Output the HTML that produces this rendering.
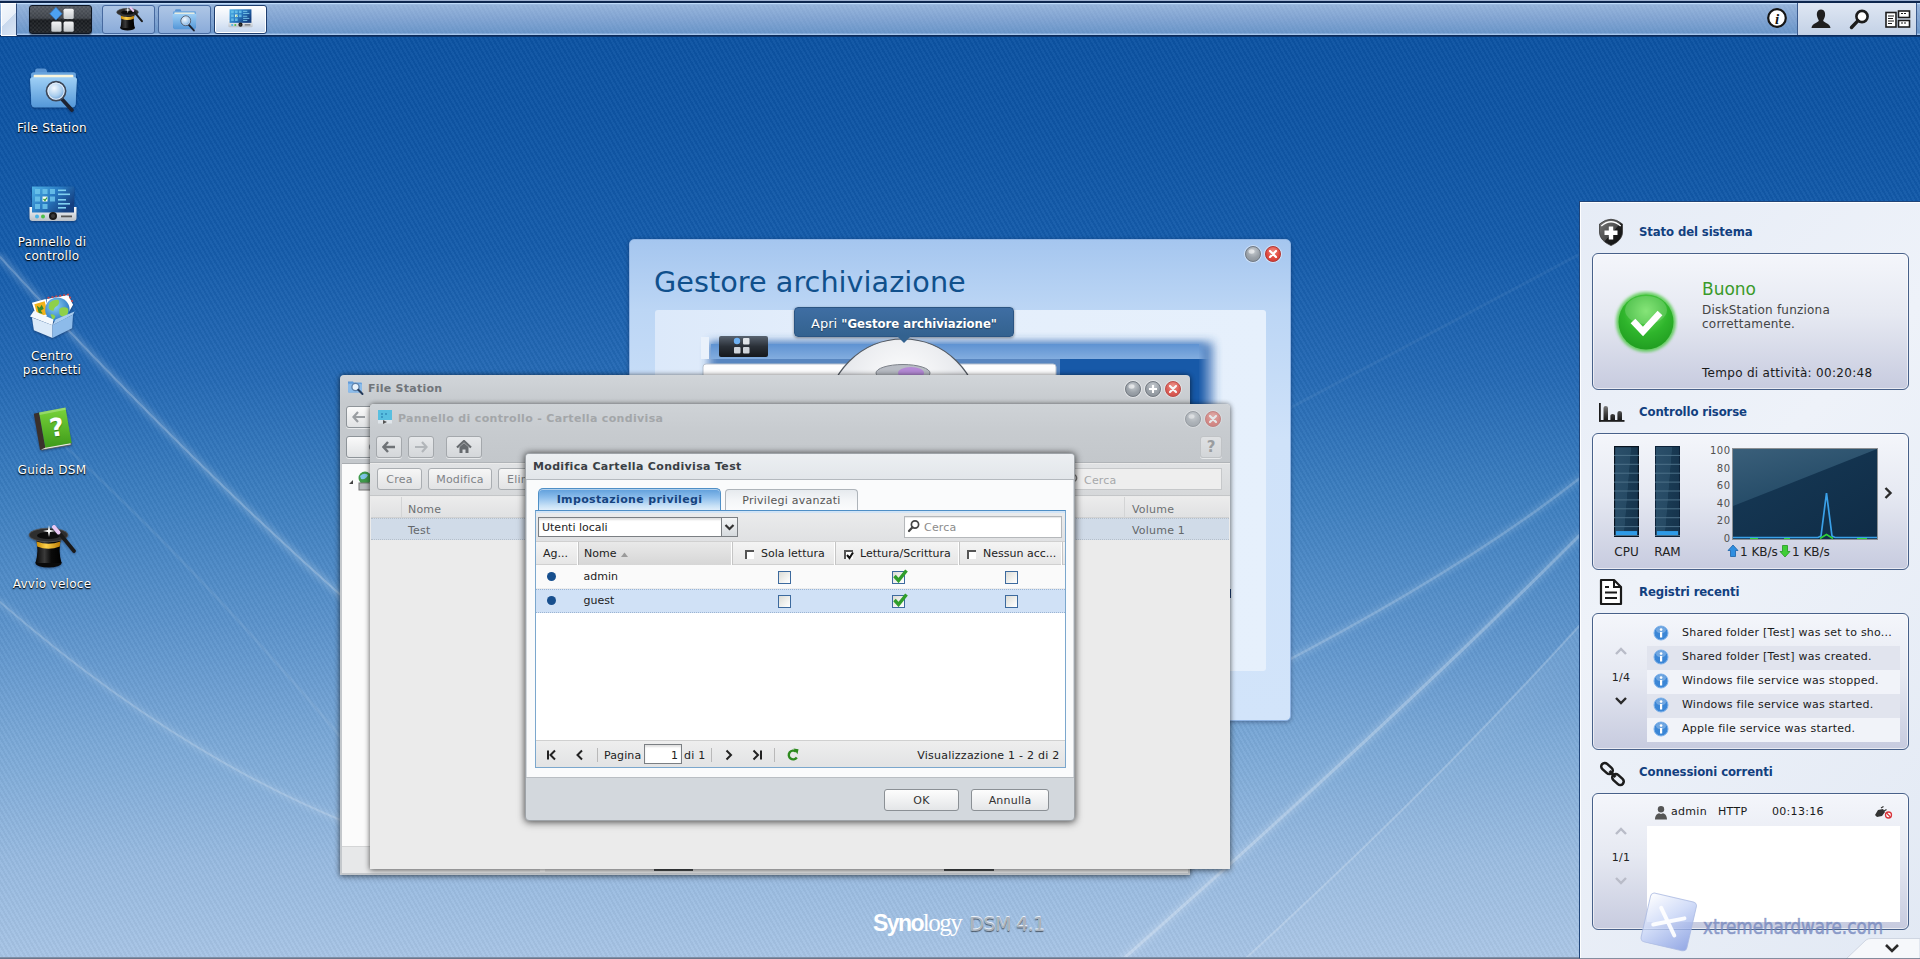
<!DOCTYPE html>
<html lang="it">
<head>
<meta charset="utf-8">
<title>Synology DiskStation</title>
<style>
*{box-sizing:border-box;margin:0;padding:0}
html,body{width:1920px;height:959px;overflow:hidden}
body{font-family:"DejaVu Sans","Liberation Sans",sans-serif;font-size:12px;color:#222;position:relative;
background:linear-gradient(to bottom,#0b52a2 0px,#0e55a5 120px,#155cab 250px,#256ab5 380px,#3d7fc0 500px,#5a92cb 620px,#7aa8d7 740px,#97bae0 860px,#a7c4e5 959px);}
.abs{position:absolute}
#stripes{position:absolute;left:0;top:0;width:1920px;height:959px;
background:repeating-linear-gradient(60deg,rgba(255,255,255,0.035) 0px,rgba(255,255,255,0.035) 2px,rgba(0,0,0,0.03) 2px,rgba(0,0,0,0.03) 4px);}
#streaks{position:absolute;left:0;top:0}
/* taskbar */
#taskbar{position:absolute;left:0;top:0;width:1920px;height:37px;background:linear-gradient(to bottom,#9cb0d0 0,#9cb0d0 .8px,#0d264d 1.300px,#0d264d 2.600px,#bfdbf9 3px,#bfdbf9 4px,#95b4db 4.600px,#82a5d3 18px,#6a96ca 33.300px,#a6c6ed 33.800px,#a6c6ed 34.800px,#0b2b5b 35.200px,#0b2b5b 36.200px,#0c4890 37px)}
#tb-stripes{position:absolute;left:0;top:4.500px;width:1920px;height:29px;background:repeating-linear-gradient(60deg,rgba(255,255,255,0.025) 0px,rgba(255,255,255,0.025) 2px,rgba(0,0,0,0.015) 2px,rgba(0,0,0,0.015) 4px)}
.tbbtn{position:absolute;top:4.500px;height:29px;width:53px;border:1px solid #46699f;border-radius:3px;background:linear-gradient(to bottom,#aec6e6,#8aabd9)}
.tbbtn.act{background:linear-gradient(to bottom,#ffffff,#dfe9f6 60%,#c4d6ee);border:1px solid #1d3d6e;box-shadow:0 0 0 1px #fff inset}
#mainmenu{position:absolute;left:28.500px;top:4.500px;width:63px;height:29px;border-radius:3px;border:1px solid #0d1624;background:linear-gradient(to bottom,#50555d 0,#3a3f46 45%,#14171b 52%,#1d2126 100%);box-shadow:0 1px 1px rgba(0,0,0,.4)}
#showdesk{position:absolute;left:0.500px;top:2.500px;width:16px;height:33px;background:linear-gradient(135deg,#f4f8fc 0,#e8eff8 50%,#c9d9ee 51%,#dbe6f4 100%);border:1px solid #fff;border-right:1px solid #2d4a78}
#tray{position:absolute;left:1797px;top:3px;width:120px;height:32px;background:linear-gradient(to bottom,#dfe7f3,#c3d1e6);border-left:1px solid #3b5b8e;border-right:1px solid #3b5b8e}
/* desktop icons */
.dicon{position:absolute;left:0;width:104px;text-align:center;color:#fff;font-size:12px;line-height:14px;letter-spacing:.28px;text-shadow:0 1px 1px rgba(0,0,0,.95),0 1px 2px rgba(0,0,0,.6)}
.dic{position:absolute;filter:drop-shadow(0 1px 1px rgba(0,0,30,.35))}
.dicon svg{display:block;margin:0 auto}
/* widget panel */
#widgets{position:absolute;left:1579px;top:200.500px;width:341px;height:759px;background:linear-gradient(135deg,#e6ecf6 0,#eef2f9 40%,#e2e9f4 100%);border-left:1.500px solid #1f4479;border-top:1.500px solid #1f4479;box-shadow:inset 1px 1px 0 rgba(255,255,255,.9)}
.wtitle{position:absolute;left:1639px;font-family:"DejaVu Sans Condensed","DejaVu Sans",sans-serif;font-weight:bold;font-size:13px;color:#12407f;letter-spacing:-0.12px;white-space:nowrap}
.wbox{position:absolute;left:1592px;width:317px;height:137px;border:1px solid #48618a;border-radius:6px;background:linear-gradient(to bottom,#f4f6fb 0,#e6e9f2 45%,#c7cbdf 100%);box-shadow:inset 0 0 0 1px rgba(255,255,255,.6)}
.wtxt{position:absolute;font-size:12px;color:#1a1a1a;white-space:nowrap}

/* window buttons */
.wb{position:absolute;width:16px;height:16px;border-radius:50%;border:1px solid #737a82;background:radial-gradient(circle at 50% 30%,#c9ced3 0,#9aa1a8 55%,#868d95 100%);box-shadow:0 0 0 1px rgba(255,255,255,.45)}
.wb.close{border-color:#b9352f;background:radial-gradient(circle at 50% 30%,#f08a80 0,#e04a40 55%,#cc372f 100%)}
.wb svg{position:absolute;left:0;top:0}
/* Gestore window */
#gest{position:absolute;left:629px;top:239px;width:662px;height:482px;border-radius:5px;border:1px solid #8fb4e4;background:linear-gradient(to bottom,#a5c6ef 0,#bcd6f5 70px,#cfe2f9 200px,#d2e4fa 100%);box-shadow:0 1px 4px rgba(0,0,30,.35)}
#gest h1{position:absolute;left:24px;top:24px;font-size:28.7px;font-weight:normal;color:#10508c;line-height:36px;letter-spacing:0.03px;white-space:nowrap}
#gest .inner{position:absolute;left:25px;top:70px;width:611px;height:361px;background:linear-gradient(to right,#dce9fa 0,#e4eefb 30%,#e6f0fc 100%);border-radius:3px;overflow:hidden}
#tip{position:absolute;left:794px;top:307px;width:220px;height:30px;background:linear-gradient(to bottom,#3f6ea3,#33628f);border:1px solid #2b5583;border-radius:4px;color:#fff;font-size:12px;line-height:31px;text-align:center;white-space:nowrap;box-shadow:0 1px 3px rgba(0,0,0,.4);text-shadow:0 1px 1px rgba(0,0,0,.4)}
#tip{font-size:13px}#tip b{font-family:"DejaVu Sans Condensed","DejaVu Sans",sans-serif}
#tip:after{content:"";position:absolute;left:102px;top:28px;border:7px solid transparent;border-top:7px solid #33628f;border-bottom:0}

/* File Station window */
.win{position:absolute;border-radius:4px 4px 0 0;background:#c9cdd1;box-shadow:0 0 5px rgba(0,0,0,.45),0 2px 6px rgba(0,0,0,.3)}
.wintitle{position:absolute;font-weight:bold;font-size:11px;white-space:nowrap;line-height:14px}
.navb{position:absolute;height:22px;border:1px solid #8e9499;border-radius:3px;background:linear-gradient(to bottom,#fafafa,#e0e2e4);box-shadow:0 1px 0 rgba(255,255,255,.6)}
.navb svg{position:absolute;left:50%;top:50%;transform:translate(-50%,-50%)}
.tbtn{position:absolute;top:469px;height:22px;border:1px solid #a9adb1;border-radius:3px;background:linear-gradient(to bottom,#f6f6f6,#e2e3e4);font-size:11px;color:#7f8387;line-height:22px;text-align:center;letter-spacing:.2px}
/* modal */
#modal{position:absolute;left:525px;top:453px;width:550px;height:368px;border-radius:4px;background:#d3d8dd;border:1px solid #9ea3a8;box-shadow:0 0 6px rgba(0,0,0,.5),0 2px 8px rgba(0,0,0,.35)}
#modal .hd{position:absolute;left:0;top:0;width:548px;height:26px;border-radius:3px 3px 0 0;background:linear-gradient(to bottom,#eceff2,#e2e6ea);border-bottom:1px solid #b4b9be}
#modal .bd{position:absolute;left:1px;top:26px;width:546px;height:297px;background:#fafbfc}
.hdc{position:absolute;top:0;height:23px;border-right:1px solid #c5c5c5;box-shadow:inset -1px 0 0 #fff;font-size:11px;line-height:24px;color:#222;white-space:nowrap;overflow:hidden}
.hcb{position:absolute;top:8px;width:9px;height:9px;background:#fff;border-top:2px solid #555;border-left:2px solid #555}
.cb{position:absolute;width:13px;height:13px;border:1px solid #3d6a9e;background:linear-gradient(135deg,#dcdcd6,#f6f6f4 70%,#fff);}
.pgi{position:absolute;top:0}
.btn{position:absolute;top:335px;height:22px;border:1px solid #8b9095;border-radius:3px;background:linear-gradient(to bottom,#fdfdfd,#e4e6e8);font-size:11px;color:#333;line-height:22px;text-align:center;letter-spacing:.2px}

.lrow{position:absolute;left:1647px;width:253px;height:24px;font-size:11px;line-height:21px;color:#1a1a1a;padding-left:35px;white-space:nowrap;letter-spacing:.24px}
.lrow svg{position:absolute;left:6px;top:3px}
.chev{position:absolute}
.ylab{position:absolute;left:1700px;width:30.500px;text-align:right;font-size:10px;color:#505050;line-height:12px;letter-spacing:.5px}
</style>
</head>
<body>

<svg width="0" height="0" style="position:absolute">
<defs>
<linearGradient id="fld1" x1="0" y1="0" x2="0" y2="1"><stop offset="0" stop-color="#9fd0f6"/><stop offset="1" stop-color="#5497d8"/></linearGradient>
<linearGradient id="fld2" x1="0" y1="0" x2="0" y2="1"><stop offset="0" stop-color="#6aa6e0"/><stop offset="1" stop-color="#3f7fc8"/></linearGradient>
<radialGradient id="lens" cx="0.4" cy="0.35" r="0.7"><stop offset="0" stop-color="#f4f9fe"/><stop offset="0.6" stop-color="#a9cdee"/><stop offset="1" stop-color="#5f95cf"/></radialGradient>
<linearGradient id="scr" x1="0" y1="0" x2="1" y2="0.6"><stop offset="0" stop-color="#4fb2e6"/><stop offset="0.5" stop-color="#2a7cc4"/><stop offset="1" stop-color="#143f80"/></linearGradient>
<linearGradient id="base" x1="0" y1="0" x2="0" y2="1"><stop offset="0" stop-color="#fafbfc"/><stop offset="1" stop-color="#b9c0c8"/></linearGradient>
<linearGradient id="bk" x1="0" y1="0" x2="0" y2="1"><stop offset="0" stop-color="#7ad43a"/><stop offset="1" stop-color="#3d9a1a"/></linearGradient>
<linearGradient id="hatb" x1="0" y1="0" x2="1" y2="0"><stop offset="0" stop-color="#050505"/><stop offset="0.35" stop-color="#3a3a3a"/><stop offset="0.6" stop-color="#0a0a0a"/><stop offset="1" stop-color="#000"/></linearGradient>
<linearGradient id="gold" x1="0" y1="0" x2="1" y2="0"><stop offset="0" stop-color="#c88a08"/><stop offset="0.4" stop-color="#ffd24a"/><stop offset="1" stop-color="#b87a05"/></linearGradient>
<radialGradient id="globe" cx="0.4" cy="0.35" r="0.7"><stop offset="0" stop-color="#8fd2f4"/><stop offset="1" stop-color="#1f6fc0"/></radialGradient>
<symbol id="i-folder" viewBox="0 0 48 48">
 <path d="M6 6.500 Q6 4.500 8 4.500 L15 4.500 Q17 4.500 17.500 6.500 L18 9 L6 9Z" fill="#5a95d4"/>
 <rect x="2" y="8" width="44" height="33" rx="2.500" fill="url(#fld2)"/>
 <rect x="4.500" y="10.500" width="39" height="5" rx="1" fill="#fbf6dc"/>
 <path d="M1 15.500 Q1 13 3.500 13 L44.500 13 Q47 13 47 15.500 L45.500 40 Q45.300 42.500 43 42.500 L5 42.500 Q2.700 42.500 2.500 40Z" fill="url(#fld1)"/>
 <path d="M31 33 L42 45" stroke="#1d2230" stroke-width="3.600" stroke-linecap="round"/>
 <circle cx="26.500" cy="26.500" r="9.300" fill="url(#lens)" stroke="#3c4657" stroke-width="1.800"/>
 <circle cx="26.500" cy="26.500" r="8" fill="none" stroke="#e6eef8" stroke-width="1"/>
</symbol>
<symbol id="i-panel" viewBox="0 0 48 48">
 <path d="M0.500 23 H4 V28 H44 V23 H47.500 V34 Q47.500 37 44.500 37 H3.500 Q0.500 37 0.500 34Z" fill="url(#base)"/>
 <rect x="3" y="2.500" width="42" height="26" fill="url(#scr)"/>
 <g fill="#6cc4ec" opacity=".85"><rect x="6" y="5" width="5" height="5"/><rect x="13.500" y="5" width="5" height="5"/><rect x="21" y="5" width="5" height="5"/><rect x="6" y="12.500" width="5" height="5"/><rect x="21" y="12.500" width="5" height="5"/><rect x="6" y="20" width="5" height="5"/><rect x="13.500" y="20" width="5" height="5"/></g>
 <rect x="13.500" y="12.500" width="5" height="5" fill="#f4fbf0"/><path d="M14.500 15 L16 16.500 L18 13.500" stroke="#2c9a3a" stroke-width="1.200" fill="none"/>
 <g fill="#7fd0f0"><rect x="29" y="5.500" width="8" height="1.600"/><rect x="29" y="9.500" width="12" height="1.600"/><rect x="29" y="15" width="8" height="1.600"/><rect x="29" y="19" width="12" height="1.600"/><rect x="29" y="23" width="8" height="1.600"/></g>
 <circle cx="8" cy="32.500" r="2" fill="#4ab4e6"/><circle cx="14" cy="32.500" r="2" fill="#4cc04a"/>
 <circle cx="24" cy="32" r="4" fill="#1a1a1a"/><circle cx="24" cy="32" r="2" fill="#3a3a3a"/>
 <rect x="32" y="31.500" width="11" height="1.800" fill="#555"/>
</symbol>
<symbol id="i-pkg" viewBox="0 0 48 48">
 <path d="M18 6 L40 2 L45 12 L38 24 L20 22Z" fill="#fff"/><path d="M19 5 L40 1.500 L44.500 9" stroke="#d64545" stroke-width="1.600" stroke-dasharray="2 2" fill="none"/>
 <path d="M3 10 L17 6 L22 23 L8 26Z" fill="#fff"/><path d="M5.500 11.500 L16 8.500 L19.500 21.500 L9 24Z" fill="#f2b21a"/><path d="M8 13 l3 2 l2 -3 l2 4 l-3 2 l2 3 l-4 0z" fill="#3e8a28"/>
 <circle cx="29" cy="17" r="12.500" fill="url(#globe)"/>
 <path d="M21 10 q4 -4 9 -3 q2 3 -1 6 q-3 1 -4 5 q-4 0 -5 -3z M31 16 q5 -3 9 0 q1 5 -3 8 q-5 1 -6 -3z M22 22 q3 -1 5 2 q-1 3 -3 3z" fill="#8ed04a"/>
 <path d="M1 24 L5 18 L25 27 L24 33Z" fill="#f3f8fd"/>
 <path d="M3 25 L24 33 L24 46 L5 38Z" fill="#dbeaf9"/>
 <path d="M24 33 L45 22 L44 36 L24 46Z" fill="#8dbbea"/>
 <path d="M24 33 L45 22 L46.500 19 L27 27Z" fill="#a9cdf0"/>
</symbol>
<symbol id="i-book" viewBox="0 0 48 48">
 <path d="M11 43 L42.500 38 L43 40.500 L12 46Z" fill="#e8e8e0" stroke="#555" stroke-width=".8"/>
 <path d="M4 8 L9.500 6.800 L16 43.500 L10.500 46Z" fill="#3a302c"/>
 <path d="M9.500 6.800 L37 1.500 L43.500 38.500 L16 43.500Z" fill="url(#bk)"/>
 <path d="M9.500 6.800 L37 1.500 L37.500 4 L10 9.500Z" fill="rgba(255,255,255,.25)"/>
</symbol>
<symbol id="i-hat" viewBox="0 0 48 48">
 <ellipse cx="20.500" cy="39" rx="13" ry="4.500" fill="#0a0a0a"/>
 <path d="M8 14 Q11 27 7.500 39 L33.500 39 Q30 27 33 14Z" fill="url(#hatb)"/>
 <path d="M8.600 17.500 Q20.500 22 32.400 17.500 L31.800 22.500 Q20.500 27 9.200 22.500Z" fill="url(#gold)"/>
 <ellipse cx="20.500" cy="11" rx="19.500" ry="6.800" fill="#2e2e2e" stroke="#555" stroke-width=".8"/>
 <ellipse cx="20.500" cy="11.500" rx="11.500" ry="3.600" fill="#0c0c0c"/>
 <path d="M28 5 L46 27" stroke="#1a1a1a" stroke-width="3.600" stroke-linecap="round"/>
 <path d="M26 3 L30.500 8.500" stroke="#e8c8f4" stroke-width="4" stroke-linecap="round"/>
 <path d="M21 1 L22 6 L27 7 L22 8 L21 13 L20 8 L15 7 L20 6Z" fill="#fff"/>
</symbol>
</defs>
</svg>
<div id="stripes"></div>
<svg id="streaks" width="1920" height="959" viewBox="0 0 1920 959">
<defs><filter id="sb" x="-5%" y="-5%" width="110%" height="110%"><feGaussianBlur stdDeviation="2.500"/></filter>
<linearGradient id="band" x1="0" y1="0" x2="0.45" y2="0.6"><stop offset="0" stop-color="#fff" stop-opacity=".3"/><stop offset="1" stop-color="#fff" stop-opacity=".04"/></linearGradient></defs>
<g fill="none" stroke-linecap="round">
<path d="M0 257 Q177 450 345 599" stroke="rgba(255,255,255,.16)" stroke-width="8" filter="url(#sb)"/>
<path d="M0 257 Q177 450 345 599" stroke="rgba(255,255,255,.2)" stroke-width="2"/>
<path d="M50 432 Q200 570 345 742" stroke="rgba(255,255,255,.07)" stroke-width="3"/>
<path d="M0 602 Q170 750 345 822" stroke="rgba(255,255,255,.1)" stroke-width="7" filter="url(#sb)"/>
<path d="M0 602 Q170 750 345 822" stroke="rgba(255,255,255,.17)" stroke-width="2"/>
<path d="M1230 690 Q1450 580 1580 478" stroke="rgba(255,255,255,.1)" stroke-width="8" filter="url(#sb)"/>
<path d="M1230 690 Q1450 580 1580 478" stroke="rgba(255,255,255,.17)" stroke-width="2.500"/>
<path d="M1105 975 Q1390 725 1580 535" stroke="rgba(255,255,255,.12)" stroke-width="9" filter="url(#sb)"/>
<path d="M1105 975 Q1390 725 1580 535" stroke="rgba(255,255,255,.22)" stroke-width="3"/>
<path d="M1290 408 L1580 254" stroke="rgba(255,255,255,.05)" stroke-width="3"/>
</g>
<path d="M1245 959 Q1430 790 1580 625 L1580 959 Z" fill="url(#band)"/>
<path d="M1245 959 Q1430 790 1580 625" stroke="rgba(255,255,255,.2)" stroke-width="2" fill="none"/>
<rect x="0" y="957" width="1920" height="2" fill="#7f8fa6"/>
</svg>

<!-- TASKBAR -->
<div id="taskbar"><div id="tb-stripes"></div>
<div id="showdesk"></div>

<div id="mainmenu"><svg width="61" height="27" viewBox="0 0 60 26" style="position:absolute;left:0;top:0"><defs><pattern id="chk" width="4" height="4" patternUnits="userSpaceOnUse"><rect width="2" height="2" fill="rgba(255,255,255,.09)"/><rect x="2" y="2" width="2" height="2" fill="rgba(255,255,255,.09)"/></pattern><linearGradient id="sq" x1="0" y1="0" x2="0" y2="1"><stop offset="0" stop-color="#f4f5f6"/><stop offset="1" stop-color="#c4c8cc"/></linearGradient></defs><rect width="60" height="26" rx="2" fill="url(#chk)"/><path d="M25.500 1 L31.500 7.300 L25.500 13.600 L19.500 7.300Z" fill="#4da2f2" stroke="#2a6fbe" stroke-width=".6"/><rect x="33" y="2.500" width="10" height="10" rx="1.500" fill="url(#sq)"/><rect x="21" y="15" width="10" height="10" rx="1.500" fill="url(#sq)"/><rect x="33" y="15" width="10" height="10" rx="1.500" fill="url(#sq)"/></svg></div>
<div class="tbbtn" style="left:102px"><svg width="27" height="27" style="position:absolute;left:13px;top:0"><use href="#i-hat"/></svg></div>
<div class="tbbtn" style="left:158px"><svg width="25" height="25" style="position:absolute;left:13px;top:1px"><use href="#i-folder"/></svg></div>
<div class="tbbtn act" style="left:214px"><svg width="25" height="25" style="position:absolute;left:13px;top:2px"><use href="#i-panel"/></svg></div>
<svg class="abs" style="left:1766px;top:7px" width="22" height="22" viewBox="0 0 22 22"><circle cx="11" cy="11" r="8.800" fill="#fff" stroke="#151515" stroke-width="2.200"/><text x="11" y="16.500" text-anchor="middle" font-family="'Liberation Serif',serif" font-style="italic" font-weight="bold" font-size="15" fill="#111">i</text></svg>
<div id="tray">
<svg class="abs" style="left:12px;top:5px" width="22" height="22" viewBox="0 0 22 22"><path d="M11 1.500 C14.500 1.500 15.500 4.500 15 8 C14.500 10.500 13.500 11.500 13.200 12.500 C13.200 14.500 20 15 20.500 20 L1.500 20 C2 15 8.800 14.500 8.800 12.500 C8.500 11.500 7.500 10.500 7 8 C6.500 4.500 7.500 1.500 11 1.500Z" fill="#1f1f1f"/></svg>
<svg class="abs" style="left:51px;top:5px" width="22" height="22" viewBox="0 0 22 22"><circle cx="13" cy="8.500" r="5.600" fill="#fff" stroke="#1c1c1c" stroke-width="2.600"/><path d="M8.800 12.800 L2.500 19.500" stroke="#1c1c1c" stroke-width="3.400" stroke-linecap="round"/></svg>
<svg class="abs" style="left:87px;top:7px" width="26" height="18" viewBox="0 0 26 18"><rect x="1" y="2.500" width="10" height="14.500" fill="#fff" stroke="#1c1c1c" stroke-width="1.600"/><path d="M3 6 H9 M3 8.500 H8 M3 11 H9 M3 13.500 H7" stroke="#1c1c1c" stroke-width="1"/><rect x="13.500" y="1" width="11" height="6.500" fill="#fff" stroke="#1c1c1c" stroke-width="1.600"/><rect x="13.500" y="10.500" width="11" height="6.500" fill="#fff" stroke="#1c1c1c" stroke-width="1.600"/><path d="M16 3.500 H22 M16 13 H22" stroke="#1c1c1c" stroke-width="1.200" stroke-dasharray="2 1"/></svg>
</div>

</div>

<!-- DESKTOP ICONS -->
<svg class="dic" style="left:29px;top:64px" width="49" height="49"><use href="#i-folder"/></svg>
<svg class="dic" style="left:29px;top:184px" width="48" height="48"><use href="#i-panel"/></svg>
<svg class="dic" style="left:29px;top:293px" width="47" height="47"><use href="#i-pkg"/></svg>
<svg class="dic" style="left:30px;top:406px" width="46" height="46"><use href="#i-book"/></svg>
<div class="abs" style="left:46px;top:414px;width:22px;text-align:center;font-family:'DejaVu Sans',sans-serif;font-weight:bold;font-size:25px;line-height:28px;color:#fff;transform:rotate(-9deg);text-shadow:0 1px 1px rgba(0,60,0,.4)">?</div>
<svg class="dic" style="left:28px;top:524px" width="48" height="48"><use href="#i-hat"/></svg>

<div class="dicon" style="top:121px">File Station</div>
<div class="dicon" style="top:235px">Pannello di<br>controllo</div>
<div class="dicon" style="top:349px">Centro<br>pacchetti</div>
<div class="dicon" style="top:463px">Guida DSM</div>
<div class="dicon" style="top:577px">Avvio veloce</div>


<div class="abs" style="left:873px;top:908px;white-space:nowrap;line-height:30px"><span style="font-family:'Liberation Sans',sans-serif;font-weight:bold;font-size:23px;letter-spacing:-1.6px;color:#fff">Syno</span><span style="font-family:'Liberation Serif',serif;font-size:25px;letter-spacing:-1.5px;color:#fff">logy</span><span style="font-family:'DejaVu Sans',sans-serif;font-size:19px;color:#a9b2bd;margin-left:8px;letter-spacing:-0.6px;text-shadow:0 -1px 0 rgba(255,255,255,.8),0 1px 1px rgba(0,0,0,.55)">DSM 4.1</span></div>
<!-- WIDGETS -->
<div id="widgets"></div>
<div class="wtitle" style="top:224px">Stato del sistema</div>
<div class="wbox" style="top:253px"></div>
<div class="wtitle" style="top:404px">Controllo risorse</div>
<div class="wbox" style="top:433px"></div>
<div class="wtitle" style="top:584px">Registri recenti</div>
<div class="wbox" style="top:613px"></div>
<div class="wtitle" style="top:764px">Connessioni correnti</div>
<div class="wbox" style="top:793px"></div>



<!-- WIDGET CONTENT -->
<svg class="abs" style="left:1598px;top:218px" width="26" height="28" viewBox="0 0 26 28"><defs><linearGradient id="sh" x1="0" y1="0" x2="1" y2="1"><stop offset="0" stop-color="#7a7a7a"/><stop offset="0.52" stop-color="#4c4c4c"/><stop offset="0.54" stop-color="#1f1f1f"/><stop offset="1" stop-color="#0e0e0e"/></linearGradient></defs><path d="M1.500 6 Q13 -3.500 24.500 6 L24.500 14 C24.500 20 20 24.500 13 27.500 C6 24.500 1.500 20 1.500 14Z" fill="url(#sh)" stroke="#3a3a3a" stroke-width=".8"/><path d="M3.300 8 Q13 -0.500 22.700 8" stroke="#fff" stroke-width="1.300" fill="none"/><path d="M10.800 8.500 H15.200 V12.500 H19.500 V17 H15.200 V21.500 H10.800 V17 H6.500 V12.500 H10.800Z" fill="#fff"/></svg>
<svg class="abs" style="left:1614px;top:290px" width="64" height="64" viewBox="0 0 64 64"><defs><radialGradient id="gc" cx="0.5" cy="0.3" r="0.75"><stop offset="0" stop-color="#6fe05f"/><stop offset="0.55" stop-color="#2fb52c"/><stop offset="1" stop-color="#1f9a1f"/></radialGradient><filter id="gb"><feGaussianBlur stdDeviation="1.500"/></filter></defs><circle cx="32" cy="32" r="30" fill="#49c840" filter="url(#gb)" opacity=".8"/><circle cx="32" cy="32" r="27.500" fill="url(#gc)"/><ellipse cx="32" cy="20" rx="21" ry="14" fill="rgba(255,255,255,.16)"/><path d="M19 31 L29 41.500 L46 23" stroke="#fff" stroke-width="6.500" fill="none"/></svg>
<div class="wtxt" style="left:1702px;top:278px;font-size:17px;color:#3a9a2a;line-height:22px">Buono</div>
<div class="wtxt" style="left:1702px;top:303px;font-size:12px;color:#444;line-height:14px;letter-spacing:.22px">DiskStation funziona<br>correttamente.</div>
<div class="wtxt" style="left:1702px;top:366px;font-size:12px;color:#1a1a1a;line-height:14px;letter-spacing:.3px">Tempo di attività: 00:20:48</div>

<svg class="abs" style="left:1598px;top:402px" width="28" height="21" viewBox="0 0 28 21"><defs><linearGradient id="bcg" x1="0" y1="0" x2="0" y2="1"><stop offset="0" stop-color="#7a7a7a"/><stop offset="0.6" stop-color="#3a3a3a"/><stop offset="1" stop-color="#1a1a1a"/></linearGradient></defs><rect x="1" y="1" width="1.800" height="18.500" fill="#1c1c1c"/><rect x="1" y="18" width="25.500" height="1.800" fill="#1c1c1c"/><path d="M5.500 18 V6 Q5.500 4 7.700 4 Q10 4 10 6 V18Z M12.400 18 V13.500 Q12.400 12 14.600 12 Q17 12 17 13.500 V18Z M19.400 18 V11 Q19.400 9 21.600 9 Q24 9 24 11 V18Z" fill="url(#bcg)"/></svg>
<div class="abs" style="left:1614px;top:446px"><svg width="25" height="91" viewBox="0 0 26 92" preserveAspectRatio="none"><defs><linearGradient id="bg1" x1="0" y1="0" x2="1" y2="0.3"><stop offset="0" stop-color="#2c506b"/><stop offset="0.62" stop-color="#264a64"/><stop offset="0.64" stop-color="#193a53"/><stop offset="1" stop-color="#17354e"/></linearGradient></defs><rect width="26" height="92" fill="url(#bg1)" stroke="#08131f" stroke-width="2.400"/><rect x="0" y="9" width="26" height="1" fill="#4d7088"/><rect x="0" y="18" width="26" height="1" fill="#4d7088"/><rect x="0" y="27" width="26" height="1" fill="#4d7088"/><rect x="0" y="36" width="26" height="1" fill="#4d7088"/><rect x="0" y="45" width="26" height="1" fill="#4d7088"/><rect x="0" y="54" width="26" height="1" fill="#4d7088"/><rect x="0" y="63" width="26" height="1" fill="#4d7088"/><rect x="0" y="72" width="26" height="1" fill="#4d7088"/><rect x="0" y="81" width="26" height="1" fill="#4d7088"/><rect x="0" y="90" width="26" height="1" fill="#4d7088"/><rect x="2" y="86" width="22" height="4" fill="#2f9be6"/></svg></div>
<div class="abs" style="left:1655px;top:446px"><svg width="25" height="91" viewBox="0 0 26 92" preserveAspectRatio="none"><defs><linearGradient id="bg2" x1="0" y1="0" x2="1" y2="0.3"><stop offset="0" stop-color="#2c506b"/><stop offset="0.62" stop-color="#264a64"/><stop offset="0.64" stop-color="#193a53"/><stop offset="1" stop-color="#17354e"/></linearGradient></defs><rect width="26" height="92" fill="url(#bg2)" stroke="#0d2238" stroke-width="2"/><rect x="0" y="9" width="26" height="1" fill="#4d7088"/><rect x="0" y="18" width="26" height="1" fill="#4d7088"/><rect x="0" y="27" width="26" height="1" fill="#4d7088"/><rect x="0" y="36" width="26" height="1" fill="#4d7088"/><rect x="0" y="45" width="26" height="1" fill="#4d7088"/><rect x="0" y="54" width="26" height="1" fill="#4d7088"/><rect x="0" y="63" width="26" height="1" fill="#4d7088"/><rect x="0" y="72" width="26" height="1" fill="#4d7088"/><rect x="0" y="81" width="26" height="1" fill="#4d7088"/><rect x="0" y="90" width="26" height="1" fill="#4d7088"/><rect x="2" y="86" width="22" height="4" fill="#2f9be6"/></svg></div>
<div class="wtxt" style="left:1613px;top:545px;width:27px;text-align:center;font-size:12px;color:#222">CPU</div>
<div class="wtxt" style="left:1654px;top:545px;width:27px;text-align:center;font-size:12px;color:#222">RAM</div>
<div class="ylab" style="top:445px">100</div><div class="ylab" style="top:463px">80</div><div class="ylab" style="top:480px">60</div><div class="ylab" style="top:498px">40</div><div class="ylab" style="top:515px">20</div><div class="ylab" style="top:533px">0</div>
<svg class="abs" style="left:1732px;top:448px" width="146" height="92" viewBox="0 0 146 92"><defs><linearGradient id="cg" x1="0" y1="0" x2="1" y2="1"><stop offset="0" stop-color="#173a57"/><stop offset="1" stop-color="#0f2c46"/></linearGradient><linearGradient id="cg2" x1="0" y1="0" x2="0.6" y2="1"><stop offset="0" stop-color="#3a5f7a"/><stop offset="1" stop-color="#1f4662"/></linearGradient></defs><rect x="0.500" y="0.500" width="145" height="91" fill="url(#cg)" stroke="#8a8e92"/><path d="M1 1 L145 1 L1 58Z" fill="url(#cg2)"/><path d="M1 89.500 L86 89.500 L89 88 L94.500 45 L100 88 L103 89.500 L145 89.500" stroke="#3aa0e8" stroke-width="1.700" fill="none"/><path d="M88 90.500 L94.500 86.500 L101 90.500" stroke="#2fd23a" stroke-width="1.500" fill="none"/><path d="M18 90.500 h8 M52 90.500 h6 M125 90.500 h10" stroke="#2fd23a" stroke-width="1"/></svg>
<svg class="abs" style="left:1727px;top:544px" width="12" height="14" viewBox="0 0 12 14"><path d="M6 1 L11 6.500 H8.500 V12.500 H3.500 V6.500 H1Z" fill="#2f8ee0" stroke="#1b62a8" stroke-width=".8"/></svg>
<div class="wtxt" style="left:1740px;top:545px;font-size:12px;color:#222">1 KB/s</div>
<svg class="abs" style="left:1779px;top:544px" width="12" height="14" viewBox="0 0 12 14"><path d="M6 13 L11 7.500 H8.500 V1.500 H3.500 V7.500 H1Z" fill="#3fce36" stroke="#23981f" stroke-width=".8"/></svg>
<div class="wtxt" style="left:1792px;top:545px;font-size:12px;color:#222">1 KB/s</div>
<svg class="abs" style="left:1883px;top:486px" width="10" height="14"><path d="M2.500 2 L7.500 7 L2.500 12" stroke="#2a2a2a" stroke-width="2.400" fill="none"/></svg>

<svg class="abs" style="left:1599px;top:578px" width="24" height="28" viewBox="0 0 24 28"><path d="M2 2 H15 L22 9 V26 H2Z" fill="#fff" stroke="#1a1a1a" stroke-width="2.200" stroke-linejoin="round"/><path d="M15 2 V9 H22" fill="none" stroke="#1a1a1a" stroke-width="2"/><path d="M6 9 H10 M6 14.500 H18 M6 20 H18" stroke="#1a1a1a" stroke-width="2.200"/></svg>
<div class="lrow" style="top:622px;background:transparent"><svg width="16" height="16" viewBox="0 0 16 16"><circle cx="8" cy="8" r="7" fill="#3b86d6" stroke="#7fb2ea" stroke-width="1"/><ellipse cx="8" cy="5" rx="5" ry="3.2" fill="rgba(255,255,255,.28)"/><rect x="7" y="7" width="2.2" height="5.5" fill="#fff"/><circle cx="8.1" cy="4.600" r="1.300" fill="#fff"/></svg>Shared folder [Test] was set to sho...</div>
<div class="lrow" style="top:646px;background:#e1e4ee"><svg width="16" height="16" viewBox="0 0 16 16"><circle cx="8" cy="8" r="7" fill="#3b86d6" stroke="#7fb2ea" stroke-width="1"/><ellipse cx="8" cy="5" rx="5" ry="3.2" fill="rgba(255,255,255,.28)"/><rect x="7" y="7" width="2.2" height="5.5" fill="#fff"/><circle cx="8.1" cy="4.600" r="1.300" fill="#fff"/></svg>Shared folder [Test] was created.</div>
<div class="lrow" style="top:670px;background:#f1f3f9"><svg width="16" height="16" viewBox="0 0 16 16"><circle cx="8" cy="8" r="7" fill="#3b86d6" stroke="#7fb2ea" stroke-width="1"/><ellipse cx="8" cy="5" rx="5" ry="3.2" fill="rgba(255,255,255,.28)"/><rect x="7" y="7" width="2.2" height="5.5" fill="#fff"/><circle cx="8.1" cy="4.600" r="1.300" fill="#fff"/></svg>Windows file service was stopped.</div>
<div class="lrow" style="top:694px;background:#e1e4ee"><svg width="16" height="16" viewBox="0 0 16 16"><circle cx="8" cy="8" r="7" fill="#3b86d6" stroke="#7fb2ea" stroke-width="1"/><ellipse cx="8" cy="5" rx="5" ry="3.2" fill="rgba(255,255,255,.28)"/><rect x="7" y="7" width="2.2" height="5.5" fill="#fff"/><circle cx="8.1" cy="4.600" r="1.300" fill="#fff"/></svg>Windows file service was started.</div>
<div class="lrow" style="top:718px;background:#f1f3f9"><svg width="16" height="16" viewBox="0 0 16 16"><circle cx="8" cy="8" r="7" fill="#3b86d6" stroke="#7fb2ea" stroke-width="1"/><ellipse cx="8" cy="5" rx="5" ry="3.2" fill="rgba(255,255,255,.28)"/><rect x="7" y="7" width="2.2" height="5.5" fill="#fff"/><circle cx="8.1" cy="4.600" r="1.300" fill="#fff"/></svg>Apple file service was started.</div>

<svg class="abs" style="left:1614px;top:646px" width="14" height="10"><path d="M2 8 L7 3 L12 8" stroke="#b9bcc8" stroke-width="2.400" fill="none"/></svg>
<div class="wtxt" style="left:1606px;top:671px;width:30px;text-align:center;font-size:11px;color:#222;letter-spacing:.3px">1/4</div>
<svg class="abs" style="left:1614px;top:696px" width="14" height="10"><path d="M2 2 L7 7 L12 2" stroke="#2a2a2a" stroke-width="2.400" fill="none"/></svg>

<svg class="abs" style="left:1599px;top:760px" width="28" height="28" viewBox="0 0 28 28"><g fill="none" stroke="#1c1c1c" stroke-width="2.600"><rect x="1.500" y="5" width="13" height="7" rx="3.500" transform="rotate(42 8 8.500)"/><rect x="12.500" y="16" width="13" height="7" rx="3.500" transform="rotate(42 19 19.500)"/><path d="M10.500 11 L16.500 17"/></g></svg>
<div class="abs" style="left:1647px;top:826px;width:253px;height:96px;background:#fff"></div>
<svg class="abs" style="left:1654px;top:805px" width="14" height="15" viewBox="0 0 14 15"><circle cx="7" cy="4.200" r="3.200" fill="#555"/><path d="M1 14.500 C1 10 3.500 8.500 5 8.200 L7 9 L9 8.200 C10.500 8.500 13 10 13 14.500Z" fill="#555"/></svg>
<div class="wtxt" style="left:1671px;top:805px;font-size:11px;color:#1a1a1a;letter-spacing:.3px">admin</div>
<div class="wtxt" style="left:1718px;top:805px;font-size:11px;color:#1a1a1a;letter-spacing:.3px">HTTP</div>
<div class="wtxt" style="left:1772px;top:805px;font-size:11px;color:#1a1a1a;letter-spacing:.3px">00:13:16</div>
<svg class="abs" style="left:1874px;top:806px" width="20" height="14" viewBox="0 0 20 14"><path d="M1 9 L4 4 L9 3 L11 6 L8 10 L3 11Z" fill="#333"/><path d="M7 2 L9.500 0.500 M10 5 L12.500 3.500" stroke="#333" stroke-width="1.200"/><circle cx="14.500" cy="9" r="3" fill="#fff" stroke="#d8343a" stroke-width="1.300"/><path d="M12.500 7 L16.500 11" stroke="#d8343a" stroke-width="1.200"/></svg>
<svg class="abs" style="left:1614px;top:826px" width="14" height="10"><path d="M2 8 L7 3 L12 8" stroke="#b9bcc8" stroke-width="2.400" fill="none"/></svg>
<div class="wtxt" style="left:1606px;top:851px;width:30px;text-align:center;font-size:11px;color:#222;letter-spacing:.3px">1/1</div>
<svg class="abs" style="left:1614px;top:876px" width="14" height="10"><path d="M2 2 L7 7 L12 2" stroke="#b9bcc8" stroke-width="2.400" fill="none"/></svg>
<!-- bottom tab + watermark -->
<svg class="abs" style="left:1846px;top:936px" width="74" height="23" viewBox="0 0 74 23"><path d="M0 23 L20 4 Q22 2.500 25 2.500 L74 2.500 L74 23Z" fill="#f6f8fb" stroke="#cfd6e2" stroke-width="1"/><path d="M40 9 L46 15 L52 9" stroke="#2a2a2a" stroke-width="2.600" fill="none"/></svg>
<svg class="abs" style="left:1630px;top:888px" width="270" height="71" viewBox="0 0 270 71"><defs><linearGradient id="wmg" x1="0" y1="0" x2="1" y2="1"><stop offset="0" stop-color="#ffffff" stop-opacity=".85"/><stop offset="0.45" stop-color="#c9d6f7" stop-opacity=".8"/><stop offset="1" stop-color="#7f97e0" stop-opacity=".8"/></linearGradient></defs><g transform="rotate(13 39 35)"><rect x="15" y="9" width="47" height="50" rx="4" fill="url(#wmg)" stroke="rgba(170,185,225,.8)" stroke-width="1"/><path d="M28 22 L47 46 M53 27 L24 40" stroke="rgba(255,255,255,.92)" stroke-width="4" stroke-linecap="round"/></g><text x="73" y="45.500" font-family="'DejaVu Sans Condensed','Liberation Sans',sans-serif" font-size="22" fill="rgba(118,136,190,.75)" stroke="rgba(118,136,190,.6)" stroke-width=".700" textLength="180" lengthAdjust="spacingAndGlyphs">xtremehardware.com</text></svg>
<div class="abs" style="left:0;top:957.500px;width:1920px;height:2px;background:rgba(100,110,130,.75)"></div>

<!-- GESTORE ARCHIVIAZIONE -->
<div id="gest">
 <h1>Gestore archiviazione</h1>
 <div class="inner">
  <svg width="611" height="361" viewBox="0 0 611 361" style="position:absolute;left:0;top:0">
   <defs>
    <filter id="blur6" x="-10%" y="-10%" width="120%" height="120%"><feGaussianBlur stdDeviation="5"/></filter>
    <filter id="blur3" x="-10%" y="-10%" width="120%" height="120%"><feGaussianBlur stdDeviation="3"/></filter>
    <linearGradient id="mtb" x1="0" y1="0" x2="0" y2="1"><stop offset="0" stop-color="#4d86cc"/><stop offset="1" stop-color="#83addf"/></linearGradient>
    <radialGradient id="disc" cx="0.5" cy="0.3" r="0.75"><stop offset="0" stop-color="#ffffff"/><stop offset="0.55" stop-color="#e6e8ec"/><stop offset="0.92" stop-color="#bfc3c9"/><stop offset="1" stop-color="#9a9fa6"/></radialGradient>
    <linearGradient id="mm" x1="0" y1="0" x2="0" y2="1"><stop offset="0" stop-color="#596370"/><stop offset="0.5" stop-color="#2a3038"/><stop offset="1" stop-color="#15181c"/></linearGradient>
    <mask id="fade"><rect x="56" y="34" width="492" height="340" fill="#fff" filter="url(#blur3)"/><rect x="56" y="34" width="488" height="340" fill="#fff"/></mask>
   </defs>
   <rect x="54" y="32" width="504" height="340" fill="#2a63ad" filter="url(#blur6)" opacity=".75"/>
   <g mask="url(#fade)">
   <rect x="52" y="27" width="504" height="22" fill="url(#mtb)"/>
   <rect x="405" y="49" width="151" height="320" fill="#1759a8"/>
   </g>
   <rect x="46" y="27" width="8" height="22" fill="#e9f1fb"/>
   <rect x="64" y="26" width="49" height="21" rx="2" fill="url(#mm)"/>
   <circle cx="82" cy="31" r="3.2" fill="#6fb1f2"/><rect x="88" y="28" width="6.5" height="6.5" rx="1" fill="#dfe3e8"/><rect x="79" y="37" width="6.5" height="6.5" rx="1" fill="#cfd4da"/><rect x="88" y="37" width="6.5" height="6.5" rx="1" fill="#cfd4da"/>
   <rect x="48" y="54" width="353" height="320" rx="3" fill="#fdfdfe" stroke="#b9c2cf"/>
   <circle cx="248" cy="105" r="76" fill="url(#disc)" stroke="#555b63" stroke-width="1.2"/>
   <ellipse cx="248" cy="63" rx="27" ry="8.5" fill="#b8bcc4" stroke="#7d828a"/>
   <ellipse cx="256" cy="63" rx="13" ry="6" fill="#b58ad6"/>
   <rect x="573" y="279" width="3" height="9" fill="#1c3f73"/>
  </svg>
 </div>
 <div class="wb" style="left:615px;top:6px"><svg width="14" height="14"><ellipse cx="5.5" cy="4.5" rx="3" ry="2.2" fill="rgba(255,255,255,.55)"/></svg></div>
 <div class="wb close" style="left:635px;top:6px"><svg width="14" height="14"><path d="M4 4 L10 10 M10 4 L4 10" stroke="#fff" stroke-width="2.2" stroke-linecap="round"/></svg></div>
</div>
<div id="tip">Apri <b>"Gestore archiviazione"</b></div>

<!-- FILE STATION WINDOW -->
<div class="win" id="fswin" style="left:340px;top:375px;width:850px;height:500px;background:linear-gradient(to bottom,#d1d5d9 0,#c6cace 28px,#c4c8cc 88px,#c4c8cc 100%)">
 <svg style="position:absolute;left:7px;top:4px" width="18" height="18" viewBox="0 0 18 18"><path d="M1 4 L1 2.5 L6 2.5 L7 4 Z" fill="#5b95d6"/><rect x="1" y="3.5" width="14" height="10" rx="1" fill="#6aa3de"/><rect x="1" y="5" width="14" height="8.5" rx="1" fill="#8cbcea"/><circle cx="8.5" cy="8" r="3.6" fill="#e8f2fb" stroke="#5c7fa8" stroke-width="1.3"/><path d="M11.3 10.8 L15.5 15" stroke="#243a5a" stroke-width="2" stroke-linecap="round"/></svg>
 <div class="wintitle" style="left:28px;top:7px;color:#70757a;letter-spacing:.25px">File Station</div>
 <div class="wb" style="left:784.5px;top:6px"><svg width="14" height="14"><ellipse cx="5.5" cy="4.5" rx="3" ry="2.2" fill="rgba(255,255,255,.55)"/></svg></div>
 <div class="wb" style="left:804.5px;top:6px"><svg width="14" height="14"><path d="M7 3 V11 M3 7 H11" stroke="#fff" stroke-width="2"/></svg></div>
 <div class="wb close" style="left:824.5px;top:6px;opacity:.85"><svg width="14" height="14"><path d="M4 4 L10 10 M10 4 L4 10" stroke="#fff" stroke-width="2.2" stroke-linecap="round"/></svg></div>
 <div class="navb" style="left:6px;top:31px;width:40px"><svg width="14" height="12" viewBox="0 0 14 12" style="left:12px"><path d="M6 1 L1.5 6 L6 11 M2 6 H13" stroke="#9a9ea2" stroke-width="2.2" fill="none"/></svg></div>
 <div class="navb" style="left:6px;top:61px;width:40px"><svg width="10" height="10" style="left:25px"><circle cx="6" cy="5" r="3.5" fill="none" stroke="#8a8e92" stroke-width="1.3"/></svg></div>
 <div style="position:absolute;left:2px;top:88px;width:200px;height:383px;background:#fbfbfb;border-top:1px solid #a8acb0"></div>
 <div style="position:absolute;left:2px;top:471px;width:846px;height:27px;background:#e7e8e9;border-top:1px solid #d4d5d6"></div><div style="position:absolute;left:314px;top:493.500px;width:39px;height:2px;background:#4a4d50"></div><div style="position:absolute;left:604px;top:493.500px;width:50px;height:2px;background:#4a4d50"></div><div style="position:absolute;left:200px;top:492px;width:5px;height:5px;background:#fafafa"></div>
 <svg style="position:absolute;left:8px;top:95px" width="24" height="22" viewBox="0 0 24 22"><path d="M1 14 L5 14 L5 10 Z" fill="#444"/><circle cx="17" cy="8" r="6.5" fill="#3f9a4b"/><path d="M12 6 q4 -4 8 -1 q-2 5 -7 4z" fill="#7fc4e8"/><rect x="11" y="13" width="12" height="7" fill="#b9bcc0" stroke="#777"/></svg>
</div>

<!-- PANNELLO DI CONTROLLO WINDOW -->
<div class="win" id="cpwin" style="left:370px;top:404px;width:860px;height:465px;background:#ebebeb">
 <div style="position:absolute;left:0;top:0;width:860px;height:59px;border-radius:4px 4px 0 0;background:linear-gradient(to bottom,#cfd3d7 0,#c7cbcf 28px,#c3c7cb 58px);border-bottom:1px solid #b0b4b8"></div>
 <svg style="position:absolute;left:7px;top:5px" width="16" height="16" viewBox="0 0 16 16"><rect x="1" y="1" width="14" height="10" fill="#58bfe0"/><rect x="1" y="11" width="14" height="3.5" fill="#dfe5ea"/><path d="M4 4h2v2h-2zM8 4h2v2h-2zM4 7h2v2h-2z" fill="#3c9ac4"/><path d="M6 11 l4 2 l-4 2z" fill="#555"/></svg>
 <div class="wintitle" style="left:28px;top:8px;color:#a3a6a9;letter-spacing:.34px">Pannello di controllo - Cartella condivisa</div>
 <div class="wb" style="left:814.5px;top:7px;opacity:.6"><svg width="14" height="14"><ellipse cx="5.5" cy="4.5" rx="3" ry="2.2" fill="rgba(255,255,255,.6)"/></svg></div>
 <div class="wb close" style="left:834.5px;top:7px;opacity:.5"><svg width="14" height="14"><path d="M4 4 L10 10 M10 4 L4 10" stroke="#fff" stroke-width="2.2" stroke-linecap="round"/></svg></div>
 <div class="navb" style="left:6px;top:32px;width:26px;border-color:#a4a8ac;background:linear-gradient(to bottom,#e6e8ea,#d4d7da)"><svg width="14" height="12" viewBox="0 0 14 12"><path d="M6 1 L1.5 6 L6 11 M2 6 H13" stroke="#6f7377" stroke-width="2.4" fill="none"/></svg></div>
 <div class="navb" style="left:38px;top:32px;width:26px;border-color:#a4a8ac;background:linear-gradient(to bottom,#e6e8ea,#d4d7da)"><svg width="14" height="12" viewBox="0 0 14 12"><path d="M8 1 L12.5 6 L8 11 M12 6 H1" stroke="#b2b6ba" stroke-width="2.2" fill="none"/></svg></div>
 <div class="navb" style="left:76px;top:32px;width:36px;border-color:#a4a8ac;background:linear-gradient(to bottom,#e6e8ea,#d4d7da)"><svg width="16" height="14" viewBox="0 0 16 14"><path d="M1 7.5 L8 1 L15 7.5" stroke="#666a6e" stroke-width="2.2" fill="none"/><path d="M3.5 7 V13 H6.5 V9.5 H9.5 V13 H12.5 V7 L8 3z" fill="#666a6e"/></svg></div>
 <div class="navb" style="left:830px;top:32px;width:22px;border-color:#c0c3c6;background:linear-gradient(to bottom,#dfe1e3,#d2d5d8);color:#9a9da0;font-weight:bold;font-size:15px;line-height:20px;text-align:center">?</div>
 <!-- toolbar 2 -->
 <div style="position:absolute;left:0;top:60px;width:860px;height:32px;background:linear-gradient(to bottom,#e0e2e4,#d6d8da);border-bottom:1px solid #c4c6c8"></div>
 <div class="tbtn" style="left:7px;top:64px;width:45px">Crea</div>
 <div class="tbtn" style="left:58px;top:64px;width:64px">Modifica</div>
 <div class="tbtn" style="left:128px;top:64px;width:60px;text-align:left;padding-left:8px">Elimina</div>
 <div style="position:absolute;left:704px;top:64px;width:148px;height:22px;border:1px solid #c6c8ca;background:#eeeeee;font-size:11px;line-height:23px;color:#a6a8aa;padding-left:9px;letter-spacing:.2px"><svg width="12" height="12" style="position:absolute;left:-7px;top:4px"><circle cx="5" cy="5" r="3.6" fill="none" stroke="#777" stroke-width="1.5"/></svg>Cerca</div>
 <!-- grid -->
 <div style="position:absolute;left:1px;top:93px;width:858px;height:21px;background:linear-gradient(to bottom,#ececec,#e0e1e2);border-bottom:1px solid #d0d1d2"></div>
 <div style="position:absolute;left:31px;top:93px;width:1px;height:21px;background:#d3d4d5"></div>
 <div style="position:absolute;left:754px;top:93px;width:1px;height:21px;background:#d3d4d5"></div>
 <div class="wtxt" style="left:38px;top:98.500px;font-size:11px;color:#6d7073;letter-spacing:.2px">Nome</div>
 <div class="wtxt" style="left:762px;top:98.500px;font-size:11px;color:#6d7073;letter-spacing:.2px">Volume</div>
 <div style="position:absolute;left:1px;top:114px;width:858px;height:22px;background:#d0dbe8;border-top:1px dotted #b5bfca;border-bottom:1px dotted #b5bfca"></div>
 <div class="wtxt" style="left:38px;top:120px;font-size:11px;color:#64676a;letter-spacing:.2px">Test</div>
 <div class="wtxt" style="left:762px;top:120px;font-size:11px;color:#64676a;letter-spacing:.2px">Volume 1</div>
</div>

<!-- MODAL -->
<div id="modal">
 <div class="hd"></div>
 <div class="wintitle" style="left:7px;top:6px;color:#3a3f45;letter-spacing:.33px">Modifica Cartella Condivisa Test</div>
 <div class="bd"></div>
 <!-- tabs -->
 <div style="position:absolute;left:12px;top:34px;width:183px;height:23px;border:1px solid #4f8fc6;border-bottom:0;border-radius:5px 5px 0 0;background:linear-gradient(to bottom,#5e9edb 0,#8fbfec 40%,#c6e0f6 75%,#e6f2fc 100%);box-shadow:inset 0 1px 0 rgba(255,255,255,.5);font-weight:bold;font-size:11px;color:#15437f;text-align:center;line-height:22px;letter-spacing:.35px;white-space:nowrap">Impostazione privilegi</div>
 <div style="position:absolute;left:199px;top:35px;width:133px;height:22px;border:1px solid #aeb4ba;border-bottom:0;border-radius:4px 4px 0 0;background:linear-gradient(to bottom,#e6eaee 0,#f4f6f8 50%,#fbfcfd 100%);font-size:11px;color:#555;text-align:center;line-height:21px;letter-spacing:.25px;white-space:nowrap">Privilegi avanzati</div>
 <!-- panel -->
 <div style="position:absolute;left:9px;top:56px;width:531px;height:258px;border:1px solid #7ba7cd;border-top:1px solid #4f8fc6;background:#fff"></div>
 <div style="position:absolute;left:10px;top:57px;width:529px;height:2px;background:#d2e4f6"></div>
 <div style="position:absolute;left:10px;top:59px;width:529px;height:29px;background:linear-gradient(to bottom,#eaebec,#e0e1e3);border-bottom:1px solid #d0d0d0"></div>
 <!-- select -->
 <div style="position:absolute;left:12px;top:63px;width:200px;height:20px;border:1px solid #7b7f83;background:#fff;box-shadow:inset 0 2px 2px rgba(0,0,0,.12);font-size:11px;line-height:20px;color:#222;padding-left:3px;white-space:nowrap">Utenti locali</div>
 <div style="position:absolute;left:195px;top:63px;width:17px;height:20px;border:1px solid #7b7f83;background:linear-gradient(to bottom,#f4f5f6,#d6dade)"><svg width="15" height="18" style="position:absolute;left:0;top:0"><path d="M3.5 7 L7.5 11 L11.5 7" stroke="#333" stroke-width="2.2" fill="none"/></svg></div>
 <!-- search -->
 <div style="position:absolute;left:378px;top:62px;width:158px;height:22px;border:1px solid #b5b8bb;background:#fff;box-shadow:inset 0 1px 1px rgba(0,0,0,.1);font-size:11px;line-height:22px;color:#8c8c8c;padding-left:19px;letter-spacing:.2px"><svg width="14" height="14" style="position:absolute;left:2px;top:2px"><circle cx="8" cy="5.5" r="3.6" fill="none" stroke="#444" stroke-width="1.7"/><path d="M5.5 8.2 L2 12" stroke="#444" stroke-width="2.2" stroke-linecap="round"/></svg>Cerca</div>
 <!-- grid header -->
 <div style="position:absolute;left:10px;top:88px;width:529px;height:23px;background:linear-gradient(to bottom,#f4f4f4,#e6e6e6);border-bottom:1px solid #d0d0d0">
  <div class="hdc" style="left:0;width:43px;padding-left:7px">Ag...</div>
  <div class="hdc" style="left:43px;width:154px;padding-left:5px;background:linear-gradient(to bottom,#e9e9e9,#d6d6d6)">Nome <svg width="7" height="5" style="margin-left:1px"><path d="M0 5 L3.5 0.5 L7 5z" fill="#9a9a9a"/></svg></div>
  <div class="hdc" style="left:197px;width:103px;padding-left:28px"><span class="hcb" style="left:12px"></span>Sola lettura</div>
  <div class="hdc" style="left:300px;width:124px;padding-left:24px"><span class="hcb" style="left:8px"><svg width="8" height="8" style="position:absolute;left:0;top:0"><path d="M1 3 L3.5 6 L7 0.5" stroke="#111" stroke-width="2" fill="none"/></svg></span>Lettura/Scrittura</div>
  <div class="hdc" style="left:424px;width:103px;padding-left:23px"><span class="hcb" style="left:7px"></span>Nessun acc...</div>
 </div>
 <!-- rows -->
 <div style="position:absolute;left:10px;top:111px;width:529px;height:24px;background:#fafafa;border-bottom:1px solid #ededed"></div>
 <div style="position:absolute;left:10px;top:135px;width:529px;height:24px;background:#d0e1f6;border-top:1px dotted #9bb4d2;border-bottom:1px dotted #9bb4d2"></div>
 <div style="position:absolute;left:21px;top:118px;width:9px;height:9px;border-radius:50%;background:#174f8e"></div>
 <div style="position:absolute;left:21px;top:142px;width:9px;height:9px;border-radius:50%;background:#174f8e"></div>
 <div class="wtxt" style="left:57.5px;top:116px;font-size:11px;color:#222">admin</div>
 <div class="wtxt" style="left:57.5px;top:140px;font-size:11px;color:#222">guest</div>
 <div class="cb" style="left:252px;top:117px"></div><div class="cb" style="left:252px;top:141px"></div>
 <div class="cb" style="left:366px;top:117px"><svg width="16" height="14" style="position:absolute;left:0;top:-3px"><path d="M1.5 7 L5.5 11.5 L13.5 1.5" stroke="#2f9e2b" stroke-width="3.4" fill="none"/></svg></div>
 <div class="cb" style="left:366px;top:141px"><svg width="16" height="14" style="position:absolute;left:0;top:-3px"><path d="M1.5 7 L5.5 11.5 L13.5 1.5" stroke="#2f9e2b" stroke-width="3.4" fill="none"/></svg></div>
 <div class="cb" style="left:479px;top:117px"></div><div class="cb" style="left:479px;top:141px"></div>
 <!-- paging -->
 <div style="position:absolute;left:10px;top:286px;width:529px;height:27px;background:linear-gradient(to bottom,#eeeeee,#e2e3e4);border-top:1px solid #d0d0d0;font-size:11px;color:#222">
  <svg class="pgi" width="250" height="28" viewBox="0 0 250 28">
   <g stroke="#222" stroke-width="2" fill="none"><path d="M12 9.5 V18.5"/><path d="M19 9.5 L14.5 14 L19 18.5"/><path d="M46 9.5 L41.5 14 L46 18.5"/><path d="M190.500 9.5 L195 14 L190.500 18.5"/><path d="M217.500 9.5 L222 14 L217.500 18.500"/><path d="M225 9.5 V18.5"/></g>
   <g stroke="#b9b9b9" stroke-width="1"><path d="M61.500 7 V21"/><path d="M175.500 7 V21"/><path d="M238.500 7 V21"/></g>
  </svg>
  <span style="position:absolute;left:68px;top:8px;letter-spacing:.1px">Pagina</span>
  <div style="position:absolute;left:108px;top:3px;width:38px;height:20px;border:1px solid #7b7f83;background:#fff;box-shadow:inset 0 2px 2px rgba(0,0,0,.12);text-align:right;padding-right:3px;line-height:21px">1</div>
  <span style="position:absolute;left:148px;top:8px;letter-spacing:.2px">di 1</span>
  <svg style="position:absolute;left:250px;top:7px" width="14" height="14" viewBox="0 0 14 14"><path d="M10.800 9.500 A4.400 4.400 0 1 1 10 3.600" stroke="#2e8a1e" stroke-width="2.400" fill="none"/><path d="M7.500 0.500 L12.500 1.200 L11.500 6.200 Z" fill="#2e8a1e"/></svg>
  <span style="position:absolute;right:5.500px;top:8px;letter-spacing:.24px;white-space:nowrap">Visualizzazione 1 - 2 di 2</span>
 </div>
 <div style="position:absolute;left:0;top:323px;width:548px;height:1px;background:#b9bec3"></div>
 <div class="btn" style="left:358px;width:75px">OK</div>
 <div class="btn" style="left:445px;width:78px">Annulla</div>
</div>
</body>
</html>
